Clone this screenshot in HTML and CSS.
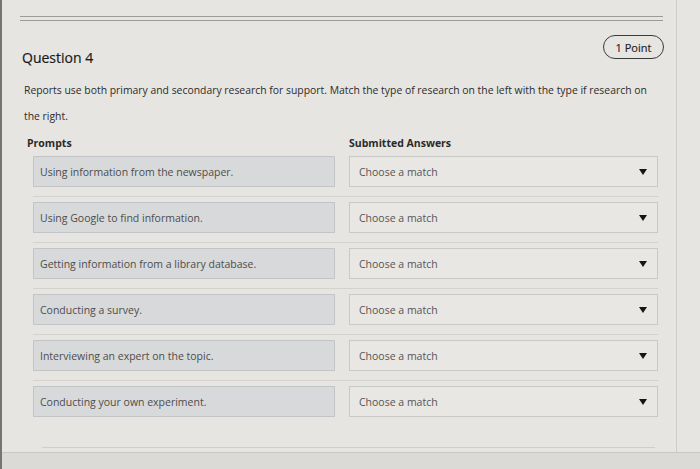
FILE: index.html
```html
<!DOCTYPE html>
<html>
<head>
<meta charset="utf-8">
<link rel="stylesheet" href="styles.css">
</head>
<body>
<div class="screen">
  <div class="card">
    <div class="rules"><span></span><span></span></div>
    <div class="qhead">
      <h2 class="qtitle">Question 4</h2>
      <span class="pill">1 Point</span>
    </div>
    <p class="qtext">Reports use both primary and secondary research for support. Match the type of research on the left with the type if research on the right.</p>
    <div class="match">
      <div class="cols-head">
        <div class="h-prompts">Prompts</div>
        <div class="h-answers">Submitted Answers</div>
      </div>
      <div class="row">
        <div class="pbox">Using information from the newspaper.</div>
        <div class="abox"><span>Choose a match</span><svg class="caret" viewBox="0 0 8 6"><path d="M0 0H8L4 6Z"/></svg></div>
      </div>
      <div class="row">
        <div class="pbox">Using Google to find information.</div>
        <div class="abox"><span>Choose a match</span><svg class="caret" viewBox="0 0 8 6"><path d="M0 0H8L4 6Z"/></svg></div>
      </div>
      <div class="row">
        <div class="pbox">Getting information from a library database.</div>
        <div class="abox"><span>Choose a match</span><svg class="caret" viewBox="0 0 8 6"><path d="M0 0H8L4 6Z"/></svg></div>
      </div>
      <div class="row">
        <div class="pbox">Conducting a survey.</div>
        <div class="abox"><span>Choose a match</span><svg class="caret" viewBox="0 0 8 6"><path d="M0 0H8L4 6Z"/></svg></div>
      </div>
      <div class="row">
        <div class="pbox">Interviewing an expert on the topic.</div>
        <div class="abox"><span>Choose a match</span><svg class="caret" viewBox="0 0 8 6"><path d="M0 0H8L4 6Z"/></svg></div>
      </div>
      <div class="row last">
        <div class="pbox">Conducting your own experiment.</div>
        <div class="abox"><span>Choose a match</span><svg class="caret" viewBox="0 0 8 6"><path d="M0 0H8L4 6Z"/></svg></div>
      </div>
    </div>
    <div class="endline"></div>
  </div>
  <div class="footer"></div>
</div>
</body>
</html>
```
FILE: styles.css
```css
html, body {
  margin: 0;
  padding: 0;
}
body {
  background: #e6e5e1;
  font-family: "Open Sans", "Liberation Sans", sans-serif;
  width: 700px;
  height: 469px;
  overflow: hidden;
}
.screen {
  border-left: 2px solid #76756f;
  height: 469px;
  box-sizing: border-box;
  display: flex;
  flex-direction: column;
}
.card {
  width: 675px;
  height: 452px;
  box-sizing: border-box;
  border-right: 1px solid #cdccc7;
  padding: 0 11px 0 18px;
  display: flex;
  flex-direction: column;
}
.rules {
  margin-top: 16px;
  width: 643px;
  display: flex;
  flex-direction: column;
  gap: 3px;
}
.rules span {
  display: block;
  height: 1px;
  background: #9c9b98;
}
.qhead {
  margin-top: 14px;
  display: flex;
  justify-content: space-between;
  align-items: flex-start;
  width: 644px;
}
.qtitle {
  margin: 13px 0 0 2px;
  font-size: 14px;
  font-weight: 400;
  line-height: 20px;
  color: #1a1a1a;
  -webkit-text-stroke: 0.2px #1a1a1a;
}
.pill {
  display: flex;
  align-items: center;
  justify-content: center;
  width: 59px;
  height: 22px;
  border: 1.5px solid #3a3a3a;
  border-radius: 12px;
  font-size: 11px;
  color: #1a1a1a;
  -webkit-text-stroke: 0.15px #1a1a1a;
}
.qtext {
  margin: 9px 0 0 4px;
  width: 630px;
  font-size: 10.4px;
  line-height: 26px;
  color: #2c2c2c;
}
.match {
  margin: 6px 0 0 13px;
  width: 625px;
}
.cols-head {
  display: grid;
  grid-template-columns: 302px 309px;
  column-gap: 14px;
  height: 16px;
  font-size: 10.5px;
  font-weight: 700;
  line-height: 16px;
  color: #2a2a2a;
}
.h-prompts {
  margin-left: -6px;
}
.row {
  display: grid;
  grid-template-columns: 302px 309px;
  column-gap: 14px;
  padding: 5px 0 9px;
  border-bottom: 1px solid #d3d2cd;
}
.row.last {
  border-bottom: none;
}
.pbox, .abox {
  height: 31px;
  box-sizing: border-box;
  display: flex;
  align-items: center;
  font-size: 10.5px;
  color: #4d4d4d;
}
.pbox {
  background: #d8d9da;
  border: 1px solid #c3c4c5;
  padding-left: 6px;
}
.abox {
  background: #e8e7e4;
  border: 1px solid #c9c9c6;
  padding: 0 10px 0 9px;
  justify-content: space-between;
  color: #555;
}
.caret {
  width: 8px;
  height: 6px;
  fill: #151515;
}
.endline {
  margin: auto 10px 4px 22px;
  height: 1px;
  background: #cfceca;
}
.footer {
  flex: 1;
  background: #dbdad7;
  border-top: 1px solid #c9c8c4;
}
```
